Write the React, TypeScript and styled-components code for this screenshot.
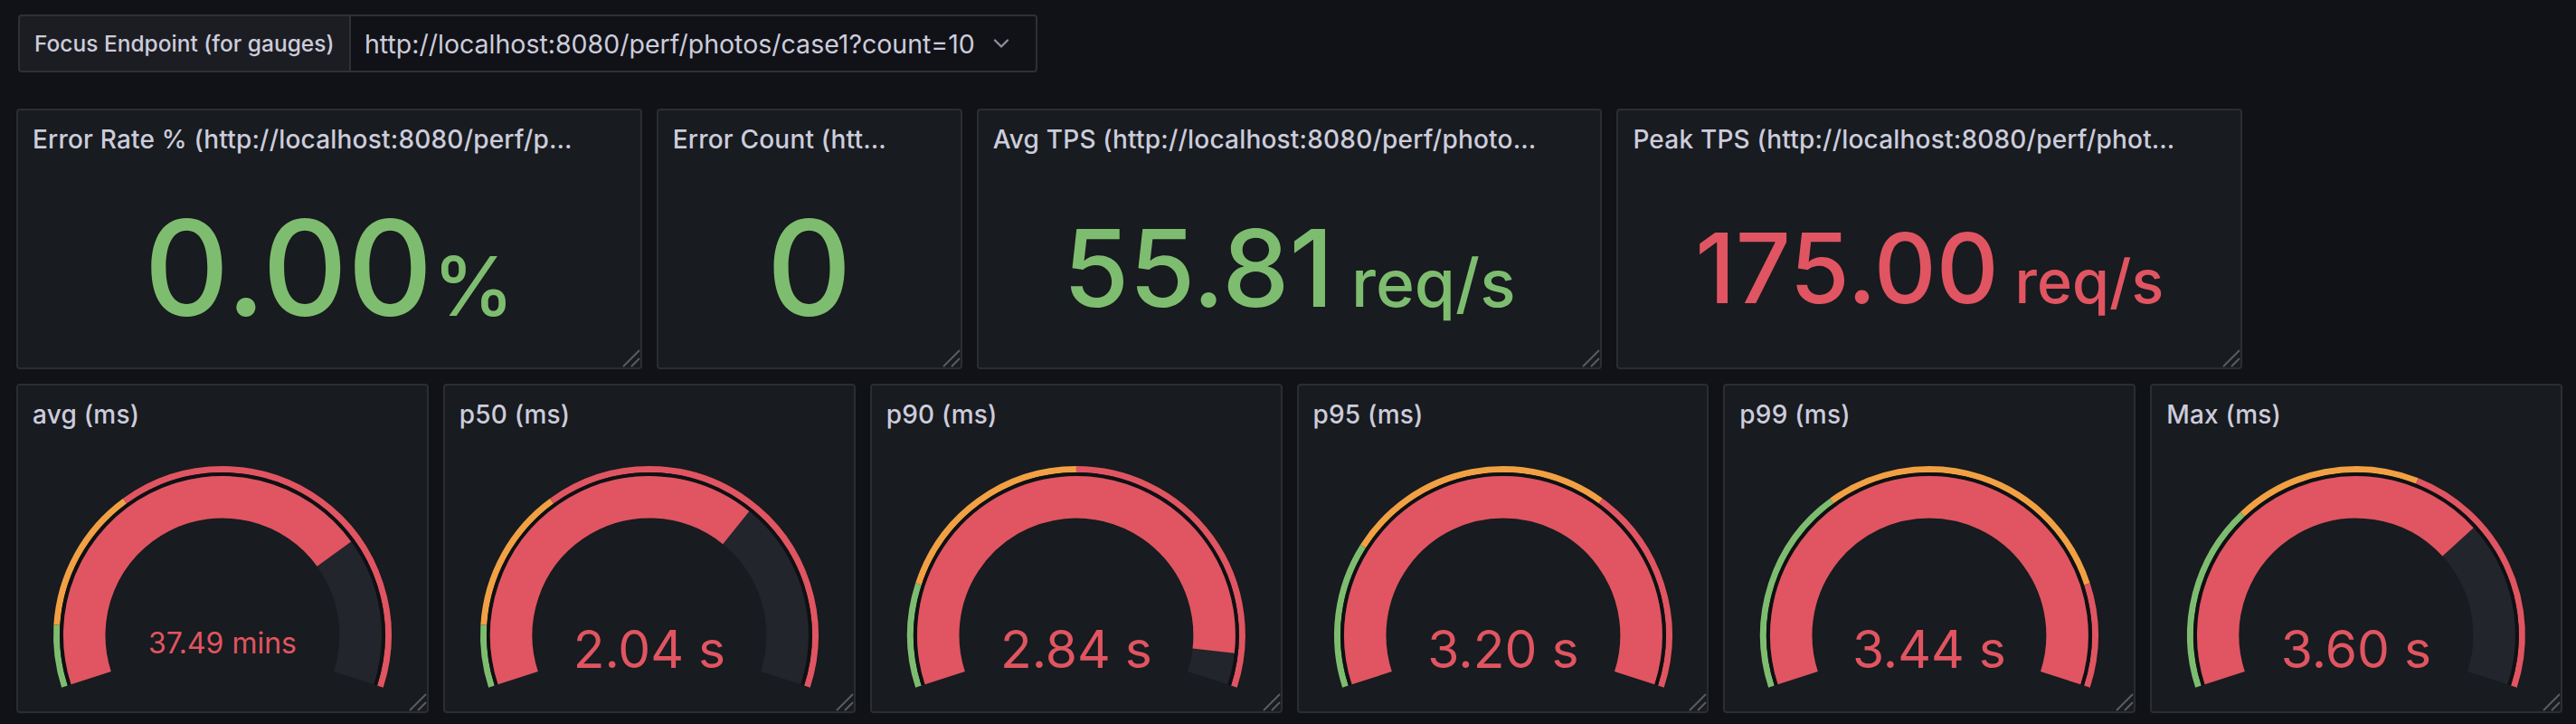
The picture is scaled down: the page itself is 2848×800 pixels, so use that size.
import React from 'react';
import styled, { createGlobalStyle } from 'styled-components';
import { ChevronDown } from 'lucide-react';

const GREEN = '#7ebd6f';
const ORANGE = '#f2a044';
const RED = '#e05561';

const GlobalStyle = createGlobalStyle`
    html, body {
        margin: 0;
        background: #111217;
    }
    body {
        font-family: Inter, "Noto Sans", sans-serif;
        color: #ccccdc;
    }
`

const Page = styled.div`
    padding: 16px 15px 12px 18px;
`
const VarBar = styled.div`
    display: flex;
    height: 64px;
    margin: 0 0 40px 2px;
`
const VarLabel = styled.label`
    display: flex;
    align-items: center;
    box-sizing: border-box;
    width: 368px;
    padding: 0 0 0 16px;
    background: #1c1d22;
    border: 2px solid #2f3036;
    border-radius: 4px 0 0 4px;
    font-size: 24.5px;
    font-weight: 500;
    color: #ccccdc;
    white-space: nowrap;
`
const VarSelect = styled.div`
    display: flex;
    align-items: center;
    justify-content: space-between;
    box-sizing: border-box;
    width: 759px;
    padding: 0 24px 0 15px;
    background: #111217;
    border: 2px solid #2f3036;
    border-left: none;
    border-radius: 0 4px 4px 0;
    font-size: 28.5px;
    color: #ccccdc;
    white-space: nowrap;
`
const Grid = styled.div`
    display: grid;
    grid-template-columns: repeat(24, minmax(0, 1fr));
    grid-template-rows: 288px 364px;
    gap: 16px;
`
const Panel = styled.section<{ $span: number }>`
    grid-column: span ${p => p.$span};
    position: relative;
    display: flex;
    flex-direction: column;
    min-width: 0;
    background: #181b1f;
    border: 2px solid #2b2d32;
    border-radius: 4px;
`
const PanelHeader = styled.header`
    flex: none;
    height: 64px;
    display: flex;
    align-items: center;
    padding: 0 69px 0 16px;
    min-width: 0;
`
const PanelTitle = styled.h2`
    margin: 0;
    min-width: 0;
    font-size: 28px;
    font-weight: 500;
    letter-spacing: 0.2px;
    line-height: 64px;
    color: #ccccdc;
    white-space: nowrap;
    overflow: hidden;
    text-overflow: ellipsis;
`
const StatBody = styled.div`
    flex: 1;
    display: flex;
    align-items: center;
    justify-content: center;
    min-height: 0;
`
const StatValue = styled.div<{ $size: number; $color: string }>`
    font-size: ${p => p.$size}px;
    font-weight: 500;
    line-height: 1;
    color: ${p => p.$color};
    white-space: nowrap;
`
const StatUnit = styled.span`
    font-size: 0.62em;
`
const GaugeBody = styled.div`
    flex: 1;
    min-height: 0;
    display: flex;
`
const GaugeSvg = styled.svg`
    width: 100%;
    height: 100%;
    display: block;
`
const GaugeText = styled.text`
    font-family: Inter, "Noto Sans", sans-serif;
    font-weight: 400;
`
const HandleSvg = styled.svg`
    position: absolute;
    right: 0;
    bottom: 0;
    width: 22px;
    height: 22px;
`

const FULL_URL = 'http://localhost:8080/perf/photos/case1?count=10';

type Stat = { title: string; span: number; value: string; unit?: string; size: number; color: string };
type Gauge = { title: string; value: string; fontSize: number; fill: number; thresholds: [number, number] };

const stats: Stat[] = [
    { title: `Error Rate % (${FULL_URL})`, span: 6, value: '0.00', unit: '%', size: 146, color: GREEN },
    { title: `Error Count (${FULL_URL})`, span: 3, value: '0', size: 146, color: GREEN },
    { title: `Avg TPS (${FULL_URL})`, span: 6, value: '55.81', unit: ' req/s', size: 118, color: GREEN },
    { title: `Peak TPS (${FULL_URL})`, span: 6, value: '175.00', unit: ' req/s', size: 107, color: RED },
];

const gauges: Gauge[] = [
    { title: 'avg (ms)', value: '37.49 mins', fontSize: 32, fill: 2249.4 / 3000, thresholds: [300 / 3000, 1000 / 3000] },
    { title: 'p50 (ms)', value: '2.04 s', fontSize: 57, fill: 2040 / 3000, thresholds: [300 / 3000, 1000 / 3000] },
    { title: 'p90 (ms)', value: '2.84 s', fontSize: 57, fill: 2840 / 3000, thresholds: [500 / 3000, 1500 / 3000] },
    { title: 'p95 (ms)', value: '3.20 s', fontSize: 57, fill: 1, thresholds: [700 / 3000, 2000 / 3000] },
    { title: 'p99 (ms)', value: '3.44 s', fontSize: 57, fill: 1, thresholds: [1000 / 3000, 2500 / 3000] },
    { title: 'Max (ms)', value: '3.60 s', fontSize: 57, fill: 3600 / 5000, thresholds: [1500 / 5000, 3000 / 5000] },
];

// flot gauge: arc from 0.9pi to 2.1pi
const START = 0.9 * Math.PI;
const SPAN = 1.2 * Math.PI;
const CX = 226;
const CY = 212;

const arc = (r: number, f0: number, f1: number) => {
    const a0 = START + SPAN * f0;
    const a1 = START + SPAN * f1;
    const x0 = CX + r * Math.cos(a0);
    const y0 = CY + r * Math.sin(a0);
    const x1 = CX + r * Math.cos(a1);
    const y1 = CY + r * Math.sin(a1);
    const large = a1 - a0 > Math.PI ? 1 : 0;
    return `M ${x0.toFixed(2)} ${y0.toFixed(2)} A ${r} ${r} 0 ${large} 1 ${x1.toFixed(2)} ${y1.toFixed(2)}`;
}

const ResizeHandle: React.FC = () => (
    <HandleSvg viewBox="0 0 22 22">
        <path d="M3 21 L21 3 M12 21 L21 12" stroke="#5a5c62" strokeWidth={2} fill="none" />
    </HandleSvg>
)

const GaugeChart: React.FC<{ g: Gauge }> = ({ g }) => {
    const [t1, t2] = g.thresholds;
    return (
        <GaugeSvg viewBox="0 0 452 296" preserveAspectRatio="xMidYMid meet">
            <path d={arc(183.5, 0, t1)} stroke={GREEN} strokeWidth={7} fill="none" />
            <path d={arc(183.5, t1, t2)} stroke={ORANGE} strokeWidth={7} fill="none" />
            <path d={arc(183.5, t2, 1)} stroke={RED} strokeWidth={7} fill="none" />
            <path d={arc(178, 0, 1)} stroke="#0f1013" strokeWidth={4} fill="none" />
            <path d={arc(152.75, 0, 1)} stroke="#22252b" strokeWidth={46.5} fill="none" />
            <path d={arc(152.75, 0, g.fill)} stroke={RED} strokeWidth={46.5} fill="none" />
            <GaugeText x={CX} y={CY + g.fontSize * 0.635} textAnchor="middle" fontSize={g.fontSize} fill={RED}>
                {g.value}
            </GaugeText>
        </GaugeSvg>
    )
}

const App: React.FC = () => {
    return (
        <Page>
            <GlobalStyle />
            <VarBar>
                <VarLabel>Focus Endpoint (for gauges)</VarLabel>
                <VarSelect>
                    {FULL_URL}
                    <ChevronDown size={28} strokeWidth={2} color="#8e8f97" />
                </VarSelect>
            </VarBar>
            <Grid>
                {stats.map(s => (
                    <Panel key={s.title} $span={s.span}>
                        <PanelHeader>
                            <PanelTitle>{s.title}</PanelTitle>
                        </PanelHeader>
                        <StatBody>
                            <StatValue $size={s.size} $color={s.color}>
                                {s.value}
                                {s.unit && <StatUnit>{s.unit}</StatUnit>}
                            </StatValue>
                        </StatBody>
                        <ResizeHandle />
                    </Panel>
                ))}
                {gauges.map(g => (
                    <Panel key={g.title} $span={4}>
                        <PanelHeader>
                            <PanelTitle>{g.title}</PanelTitle>
                        </PanelHeader>
                        <GaugeBody>
                            <GaugeChart g={g} />
                        </GaugeBody>
                        <ResizeHandle />
                    </Panel>
                ))}
            </Grid>
        </Page>
    )
}

export default App;
